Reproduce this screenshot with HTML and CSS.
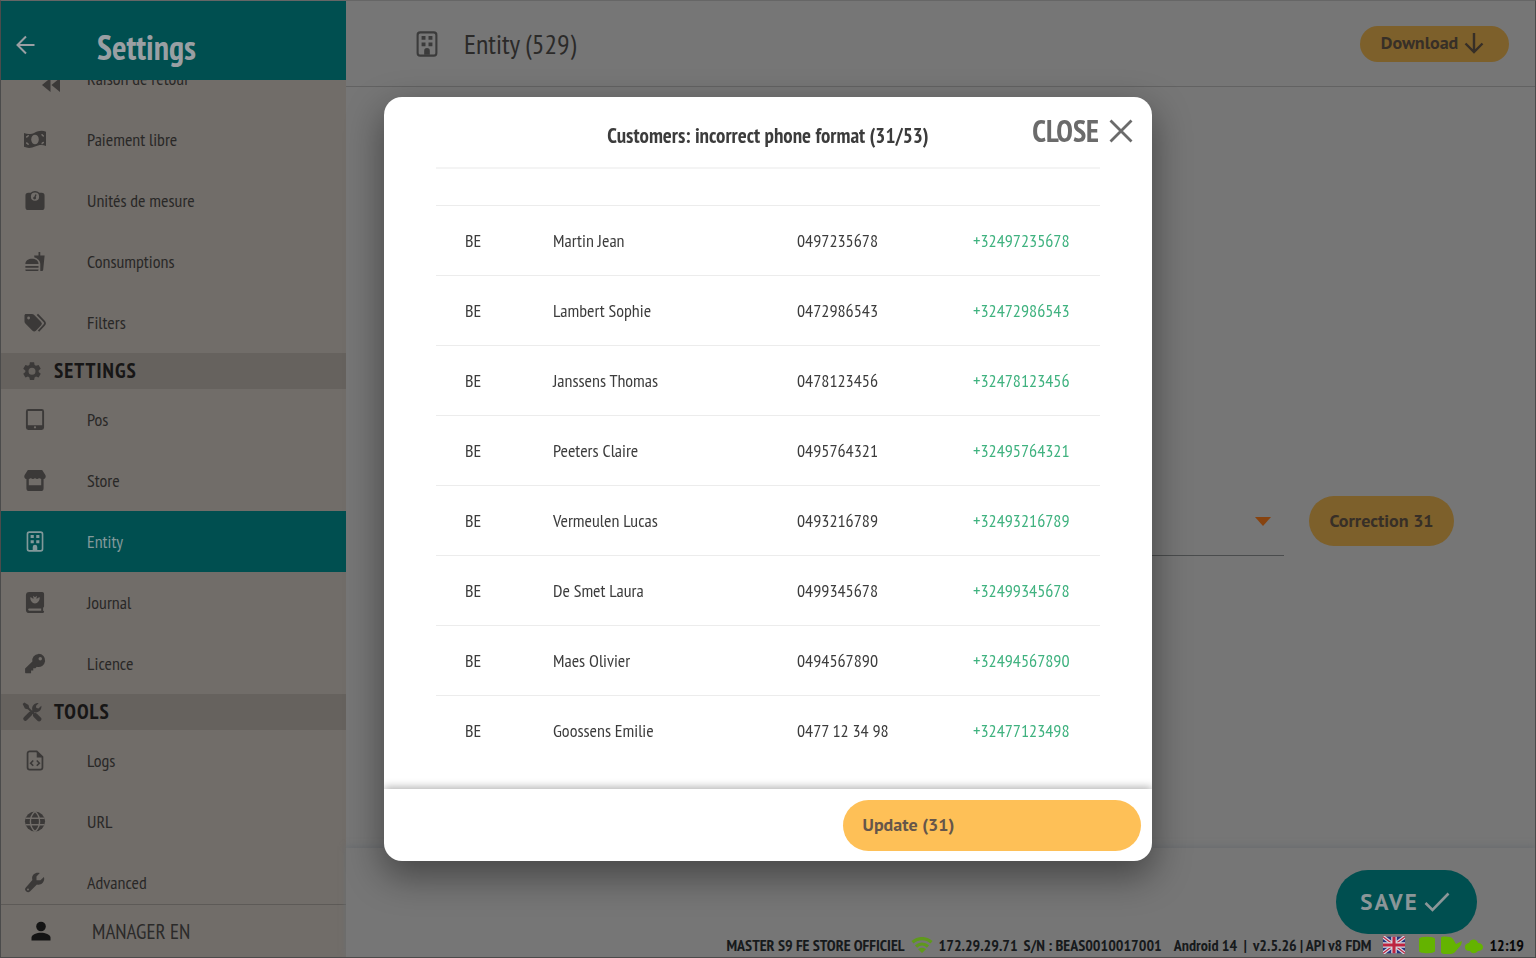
FILE: index.html
```html
<!DOCTYPE html>
<html lang="en">
<head>
<meta charset="utf-8">
<meta name="viewport" content="width=device-width, initial-scale=1">
<title>Settings - Entity</title>
<link rel="stylesheet" href="styles.css">
</head>
<body>
<svg class="sprite" aria-hidden="true">
  <symbol id="building" viewBox="0 0 20 24"><rect x="1.3" y="1.3" width="17.4" height="21.4" rx="2.4" fill="none" stroke="currentColor" stroke-width="2"/><path fill="currentColor" d="M5 4.600h3.600v3.400H5zM11.400 4.600H15v3.400h-3.600zM5 10.600h3.600V14H5zM11.400 10.600H15V14h-3.600zM7.400 22v-3.600a2.600 2.600 0 0 1 5.200 0V22z"/></symbol>
</svg>
<div class="app">
  <aside class="sidebar">
    <header class="sidebar-head">
      <button class="back" aria-label="Back"><svg viewBox="0 0 20 20"><path d="M18.500 10H2M10 1.500 1.500 10l8.500 8.500" fill="none" stroke="currentColor" stroke-width="2"/></svg></button>
      <h1>Settings</h1>
    </header>
    <nav class="menu-view" aria-label="Settings">
      <div class="menu">
        <a class="item" href="#"><svg class="rewind" viewBox="0 0 20 16"><path fill="currentColor" d="M9.500 1v14L1 8zM19 1v14l-8.500-7z"/></svg><span>Raison de retour</span></a>
        <a class="item" href="#"><svg viewBox="0 0 24 20"><path fill="currentColor" d="M1 3.500c4 2 8 1 11-.5s7-2.500 11-.8v14.300c-4-1.700-8-.7-11 .6s-7 2-11 .2z"/><ellipse cx="12" cy="10" rx="3.800" ry="4.800" fill="#716d69"/><path fill="none" stroke="#716d69" stroke-width="1.300" d="M3 7.500c1.400 0 2.200-.7 2.300-2M21 6.500c-1.300 0-2-.8-2-2M3 13.500c1.300 0 2.200.9 2.200 2M21 13c-1.300 0-2 .7-2 1.800"/></svg><span>Paiement libre</span></a>
        <a class="item" href="#"><svg viewBox="0 0 22 22"><path fill="currentColor" d="M4 3h2.500a6 6 0 0 1 9 0H18a3 3 0 0 1 3 3v12a3 3 0 0 1-3 3H4a3 3 0 0 1-3-3V6a3 3 0 0 1 3-3z"/><circle cx="11" cy="7" r="4.300" fill="#716d69"/><path d="m10.500 8.600 1.500-4" stroke="currentColor" stroke-width="1.400"/><circle cx="10.600" cy="8.500" r="1.500" fill="currentColor"/></svg><span>Unités de mesure</span></a>
        <a class="item" href="#"><svg viewBox="0 0 24 24"><path fill="currentColor" d="M18.060 22.990h1.660c.84 0 1.530-.64 1.630-1.460L23 5.050h-5V1h-1.970v4.050h-4.970l.3 2.340c1.710.47 3.310 1.320 4.270 2.260 1.440 1.420 2.430 2.890 2.430 5.290zM1 21.990V21h15.030v.99c0 .55-.45 1-1.010 1H2.010c-.56 0-1.010-.45-1.010-1zm15.030-7c0-8-15.030-8-15.030 0zM1 17h15v2H1z"/></svg><span>Consumptions</span></a>
        <a class="item" href="#"><svg viewBox="0 0 24 22"><path fill="currentColor" d="M1 3.500V10c0 .8.300 1.500.9 2.100l7.500 7.500a2.500 2.500 0 0 0 3.500 0l5.500-5.600a2.500 2.500 0 0 0 0-3.500L10.900 3A3 3 0 0 0 8.800 2H2.500C1.700 2 1 2.700 1 3.500z"/><circle cx="5.300" cy="6.300" r="1.500" fill="#716d69"/><path fill="none" stroke="currentColor" stroke-width="1.900" d="m14.500 2.500 7 7.200c1.200 1.300 1.200 2.800 0 4l-5.800 6.300"/></svg><span>Filters</span></a>
        <h2 class="section"><svg viewBox="0 0 24 24"><path fill="currentColor" fill-rule="evenodd" d="m9.500 1.500-.6 3.200-1.700 1-3.100-1-2.600 4.500 2.500 2.100v1.900l-2.500 2.100 2.600 4.500 3.100-1.100 1.700 1 .6 3.200h5l.6-3.200 1.700-1 3.100 1.100 2.600-4.500-2.500-2.100v-1.900l2.500-2.100-2.600-4.500-3.100 1-1.700-1-.6-3.200zM12 8a4.200 4.200 0 1 1 0 8.400A4.200 4.200 0 0 1 12 8z"/></svg><span>SETTINGS</span></h2>
        <a class="item" href="#"><svg viewBox="0 0 20 22"><path fill="currentColor" fill-rule="evenodd" d="M3 0h14a2.500 2.500 0 0 1 2.500 2.500v17A2.500 2.500 0 0 1 17 22H3a2.500 2.500 0 0 1-2.500-2.500v-17A2.500 2.500 0 0 1 3 0zm-.5 2v15h15V2z"/><circle cx="10" cy="19.200" r="1.200" fill="#716d69"/></svg><span>Pos</span></a>
        <a class="item" href="#"><svg viewBox="0 0 24 22"><path fill="currentColor" fill-rule="evenodd" d="M4.500 0h15L23 5.500c.8 2-.4 3.900-2 4V19a3 3 0 0 1-3 3H6a3 3 0 0 1-3-3V9.500c-1.600-.1-2.800-2-2-4zM5.500 9.500V16h13V9.500c-1 0-1.700-.5-2.200-1-.6.700-1.300 1-2.100 1s-1.600-.4-2.200-1c-.6.600-1.300 1-2.200 1s-1.500-.3-2.100-1c-.5.500-1.200 1-2.200 1z"/></svg><span>Store</span></a>
        <a class="item active" href="#" aria-current="page"><svg viewBox="0 0 20 24"><use href="#building"/></svg><span>Entity</span></a>
        <a class="item" href="#"><svg viewBox="0 0 20 22"><path fill="currentColor" fill-rule="evenodd" d="M4 0h13.500c1.200 0 2 .8 2 2v13c0 .7-.4 1.200-1 1.500v3.200c.6.100 1 .5 1 1.100s-.5 1.200-1.200 1.200H4a3.500 3.500 0 0 1-3.500-3.500v-15A3.500 3.500 0 0 1 4 0zm0 17.200a1.200 1.200 0 0 0 0 2.400h12.500v-2.400z"/><path fill="#716d69" d="M5 5.500c2 0 2 1.500 3.500 1.500L8 4l2 1.500L12 4l-.5 3C13 7 13 5.500 15 5.500c0 3.500-2 6.500-5 6.500s-5-3-5-6.500z"/></svg><span>Journal</span></a>
        <a class="item" href="#"><svg viewBox="0 0 24 24"><path fill="currentColor" fill-rule="evenodd" d="M16 1a7.500 7.500 0 1 1-2 14.700L12.500 17.500H10v2.600H7.500V23H1.500a.8.800 0 0 1-.8-.8v-4.400L9 9.800A7.500 7.500 0 0 1 16 1zm2 3.700a2 2 0 1 0 0 4 2 2 0 0 0 0-4z"/></svg><span>Licence</span></a>
        <h2 class="section"><svg viewBox="0 0 24 24"><path stroke="currentColor" fill="none" stroke-width="5" stroke-linecap="round" d="m4 20 6-6"/><path stroke="currentColor" fill="none" stroke-width="5.500" stroke-linecap="round" d="m16 16 4.500 4.500"/><path stroke="currentColor" stroke-width="2.400" d="m4 4 12 12"/><path fill="currentColor" d="m.8 2.500 2-2 5 3 .8 3.300-1.900 1.900-3.200-.9zM12.500 10c-1.500-4.500 2-9.500 7.500-8.800l-3.300 3.500.5 2.600 2.600.5L23.200 4.500c.9 5.200-4 9-8.200 7.700l-3 2.500-2-2z"/></svg><span>TOOLS</span></h2>
        <a class="item" href="#"><svg viewBox="0 0 20 24"><path fill="none" stroke="currentColor" stroke-width="2" d="M4 1.500h8l6.500 6.300V20a2.500 2.500 0 0 1-2.500 2.500H4A2.500 2.500 0 0 1 1.500 20V4A2.500 2.500 0 0 1 4 1.500z"/><path fill="currentColor" d="M12 2v6.500h6.500z"/><path fill="none" stroke="currentColor" stroke-width="1.800" d="m8 12-3 3 3 3M12 12l3 3-3 3"/></svg><span>Logs</span></a>
        <a class="item" href="#"><svg viewBox="0 0 24 24"><circle cx="12" cy="12" r="11.500" fill="currentColor"/><path fill="none" stroke="#716d69" stroke-width="1.600" d="M1 8.300h22M1 15.700h22M12 .5c-7 6-7 17 0 23M12 .5c7 6 7 17 0 23"/></svg><span>URL</span></a>
        <a class="item" href="#"><svg viewBox="0 0 24 24"><path fill="currentColor" fill-rule="evenodd" d="M9 9C7.500 4 12-.5 17.500 1.200L13.700 5.200v4.300h4.500l4-3.900c1.600 5.600-3 10.200-8 8.800l-7.700 7.700a3.300 3.300 0 0 1-4.700-4.700zM4 18.900a1.100 1.100 0 1 0 0 2.200 1.100 1.100 0 0 0 0-2.200z"/></svg><span>Advanced</span></a>
      </div>
    </nav>
    <button class="user"><svg viewBox="0 0 20 20"><circle cx="10" cy="5.500" r="4.800" fill="currentColor"/><path fill="currentColor" d="M.5 19.500v-2.800c0-3.200 5.500-5 9.500-5s9.500 1.800 9.500 5v2.800z"/></svg><span>MANAGER EN</span></button>
  </aside>

  <main class="main">
    <header class="main-head">
      <svg class="entity-icon" viewBox="0 0 20 24" aria-hidden="true"><use href="#building"/></svg>
      <h2>Entity (529)</h2>
      <button class="pill download">Download <svg viewBox="0 0 20 22"><path d="M10 1v19M1.500 11.500 10 20l8.500-8.500" fill="none" stroke="currentColor" stroke-width="2.400"/></svg></button>
    </header>
    <section class="content">
      <div class="field">
        <select aria-label="Country"><option></option></select>
        <svg viewBox="0 0 16 9" aria-hidden="true"><path d="M0 0h16L8 9z" fill="currentColor"/></svg>
      </div>
      <button class="pill correction">Correction 31</button>
    </section>
    <footer class="main-foot">
      <button class="save">SAVE <svg viewBox="0 0 26 20"><path d="m1.500 11 7 7L24.500 1.500" fill="none" stroke="currentColor" stroke-width="2.600"/></svg></button>
      <div class="status">
        <span>MASTER S9 FE STORE OFFICIEL</span>
        <svg class="wifi" viewBox="0 0 22 16"><path d="M1.500 5.300c5.500-5 13.500-5 19 0M5 9.500c3.600-3.200 8.400-3.200 12 0" fill="none" stroke="currentColor" stroke-width="3.200"/><path d="M11 16 7 12.200c2.200-2 5.800-2 8 0z" fill="currentColor"/></svg>
        <span>172.29.29.71</span>
        <span>S/N : BEAS0010017001</span>
        <span class="version">Android 14 &nbsp;|&nbsp; v2.5.26 | API v8 FDM</span>
        <svg class="flag" viewBox="0 0 24 18"><path fill="#26337f" d="M0 0h24v18H0z"/><path d="m0 0 24 18M24 0 0 18" stroke="#d8d8e0" stroke-width="4"/><path d="m0 0 24 18M24 0 0 18" stroke="#bd2440" stroke-width="1.400"/><path d="M12 0v18M0 9h24" stroke="#d8d8e0" stroke-width="6"/><path d="M12 0v18M0 9h24" stroke="#bd2440" stroke-width="3.400"/></svg>
        <svg class="state" viewBox="0 0 64 18"><path fill="currentColor" d="M1 3c0-3 16-3 16 0v12c0 3-16 3-16 0zM23 2c0-2 10-2 12 1l3 5 6-3-1 4-6 7c-2 3-14 3-14 0zM47 11c0-3 3-4 4-4 2-5 8-4 9 0 3 0 5 2 5 4 0 3-3 4-5 4-3 3-6 3-8 0-3 0-5-1-5-4z"/></svg>
        <time>12:19</time>
      </div>
    </footer>
  </main>
</div>

<div class="overlay">
  <div class="modal" role="dialog" aria-modal="true" aria-labelledby="dialog-title">
    <header class="modal-head">
      <h2 id="dialog-title">Customers: incorrect phone format (31/53)</h2>
      <button class="close">CLOSE <svg viewBox="0 0 24 24"><path d="m1.500 1.500 21 21M22.500 1.500l-21 21" stroke="currentColor" stroke-width="2.800"/></svg></button>
    </header>
    <div class="modal-body">
      <table>
        <colgroup><col class="c-country"><col class="c-name"><col class="c-phone"><col></colgroup>
        <tbody>
          <tr class="spacer"><td colspan="4"></td></tr>
          <tr><td>BE</td><td>Martin Jean</td><td>0497235678</td><td>+32497235678</td></tr>
          <tr><td>BE</td><td>Lambert Sophie</td><td>0472986543</td><td>+32472986543</td></tr>
          <tr><td>BE</td><td>Janssens Thomas</td><td>0478123456</td><td>+32478123456</td></tr>
          <tr><td>BE</td><td>Peeters Claire</td><td>0495764321</td><td>+32495764321</td></tr>
          <tr><td>BE</td><td>Vermeulen Lucas</td><td>0493216789</td><td>+32493216789</td></tr>
          <tr><td>BE</td><td>De Smet Laura</td><td>0499345678</td><td>+32499345678</td></tr>
          <tr><td>BE</td><td>Maes Olivier</td><td>0494567890</td><td>+32494567890</td></tr>
          <tr><td>BE</td><td>Goossens Emilie</td><td>0477 12 34 98</td><td>+32477123498</td></tr>
        </tbody>
      </table>
    </div>
    <footer class="modal-foot"><button class="update">Update (31)</button></footer>
  </div>
</div>
</body>
</html>
```
FILE: styles.css
```css
:root {
  --teal: #004f50;
  --sand: #716d69;
  --grey: #767676;
  --amber: #7d602b;
  --narrow: "PT Sans Narrow", "Liberation Sans Narrow", "Open Sans", sans-serif;
  --wide: "PT Sans", "Noto Sans", sans-serif;
}
* { box-sizing: border-box; }
body { margin: 0; font-family: var(--narrow); color: #2b2a29; background: var(--grey); }
button { font: inherit; color: inherit; border: 0; padding: 0; background: none; cursor: pointer; }
h1, h2 { margin: 0; font-size: inherit; }
svg { flex: none; }
.sprite { display: none; }

.app { display: flex; height: 100vh; border: 1px solid #4b4b4b; border-top-color: #666; overflow: hidden; }

.sidebar { display: flex; flex-direction: column; width: 345px; flex: none; background: var(--sand); }
.sidebar-head { display: flex; align-items: center; gap: 61px; height: 79px; padding: 12px 15px 0; flex: none; background: var(--teal); color: #9a9fa3; }
.sidebar-head h1 { font-size: 34px; line-height: 40px; }
.back { display: flex; padding-bottom: 4px; }
.back svg { width: 20px; height: 20px; }
.menu-view { flex: 1; min-height: 0; overflow: hidden; }
.menu { margin-top: -32px; }
.item { display: flex; align-items: center; height: 61px; padding-left: 22px; color: #292827; text-decoration: none; font-size: 18px; line-height: 24px; }
.item svg { width: 24px; height: 21px; margin-right: 40px; color: #3b3938; }
.item .rewind { width: 20px; height: 16px; margin: 12px 26px 0 18px; }
.active, .active svg { background: var(--teal); color: #82999a; }
.section { display: flex; align-items: center; gap: 11px; height: 36px; padding-left: 20px; background: #66625e; color: #171616; font-size: 21px; line-height: 24px; letter-spacing: 1px; }
.section svg { width: 22px; height: 20px; color: #3b3938; }
.user { display: flex; align-items: center; gap: 41px; height: 53px; padding-left: 30px; flex: none; border-top: 1px solid #5d5a57; font-size: 21px; }
.user svg { width: 20px; height: 20px; color: #141414; }

.main { display: flex; flex: 1; min-width: 0; flex-direction: column; }
.main-head { display: flex; align-items: center; height: 86px; padding: 0 26px 0 70px; flex: none; border-bottom: 1px solid #626262; }
.entity-icon { width: 22px; height: 26px; margin-right: 26px; color: #3b3b3b; }
.main-head h2 { font-size: 28px; font-weight: 400; line-height: 36px; }
.pill { background: var(--amber); color: #372f27; font-family: var(--wide); font-weight: 700; font-size: 18px; line-height: 24px; }
.download { display: flex; align-items: center; justify-content: center; gap: 6px; width: 149px; height: 36px; margin-left: auto; padding: 0 4px 2px 0; border-radius: 18px; }
.download svg { width: 20px; height: 22px; }
.content { display: flex; flex: 1; align-items: center; padding: 106px 81px 0 38px; gap: 25px; }
.field { position: relative; flex: 1; height: 71px; border-bottom: 1px solid #4a4c4d; }
.field select { width: 100%; height: 100%; border: 0; background: none; appearance: none; }
.field svg { position: absolute; right: 13px; top: 32px; width: 16px; height: 9px; color: #87430f; pointer-events: none; }
.correction { width: 145px; height: 50px; border-radius: 25px; }
.main-foot { display: flex; flex-direction: column; justify-content: space-between; flex: none; height: 109px; padding-top: 22px; box-shadow: 0 -2px 6px #6a6d70; }
.save { display: flex; align-items: center; justify-content: center; align-self: flex-end; gap: 5px; width: 141px; height: 64px; margin-right: 58px; padding-right: 3px; border-radius: 32px; background: var(--teal); color: #8b9698; font: 700 23px/28px var(--wide); letter-spacing: 2px; }
.save svg { width: 26px; height: 20px; }
.status { display: flex; align-items: center; justify-content: flex-end; height: 23px; padding: 0 11px 2px 0; color: #171a1c; font-size: 16px; font-weight: 700; line-height: 20px; white-space: nowrap; gap: 6px; }
.wifi { width: 22px; height: 16px; color: #5f991c; }
.version { margin: 0 6px; }
.flag { width: 22px; height: 18px; }
.state { width: 66px; height: 18px; margin-left: 6px; color: #64b300; }
.status time { color: #080808; }

.overlay { position: fixed; inset: 0; display: flex; align-items: center; justify-content: center; }
.modal { display: flex; flex-direction: column; width: 50vw; height: calc(80vh - 2px); overflow: hidden; border-radius: 18px; background: #fff; box-shadow: 0 14px 36px 2px rgba(0, 0, 0, .4); color: #3c3c3c; }
.modal-head { display: grid; grid-template-columns: 1fr auto 1fr; align-items: center; height: 70px; padding: 8px 19px 0; flex: none; }
.modal-head h2 { grid-column: 2; font-size: 21px; line-height: 28px; }
.close { display: flex; align-items: center; justify-self: end; gap: 10px; padding-bottom: 10px; color: #6b6b6b; font-size: 30px; font-weight: 700; line-height: 32px; }
.close svg { width: 24px; height: 24px; }
.modal-body { flex: 1; min-height: 0; padding: 0 52px; overflow: hidden; }
table { width: 100%; table-layout: fixed; border-collapse: collapse; border-top: 2px solid #f4f4f4; font-size: 18px; line-height: 24px; }
.c-country { width: 88px; }
.c-name { width: 244px; }
.c-phone { width: 176px; }
tr { height: 70px; border-bottom: 1px solid #ececec; }
tr:last-child { border-bottom: 0; }
.spacer { height: 38px; }
td { padding: 0 0 0 29px; white-space: nowrap; }
td:last-child { color: #3fb27f; }
.modal-foot { display: flex; justify-content: flex-end; align-items: center; flex: none; height: 72px; padding: 0 11px; box-shadow: 0 -2px 8px rgba(0, 0, 0, .3); }
.update { width: 40%; height: 51px; padding-left: 20px; border-radius: 26px; background: #fec057; color: #66564a; font: 700 18px/24px var(--wide); text-align: left; }
```
